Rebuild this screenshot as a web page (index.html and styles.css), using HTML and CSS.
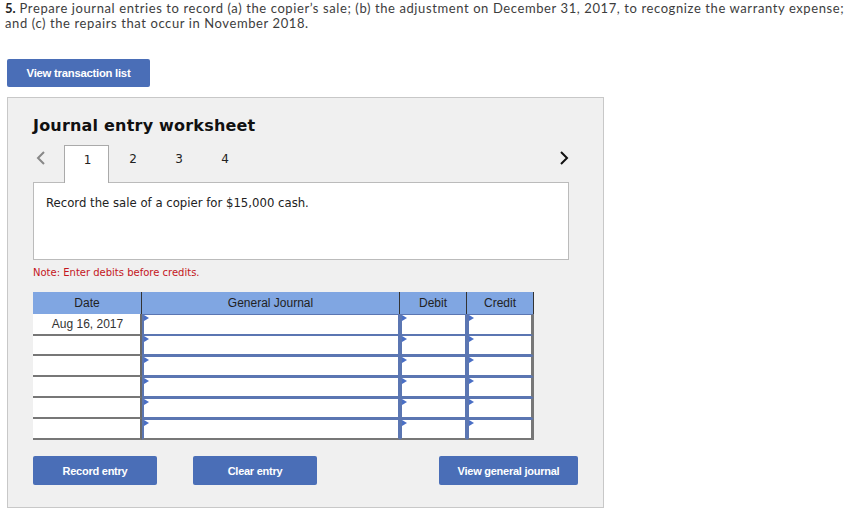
FILE: index.html
```html
<!DOCTYPE html>
<html>
<head>
<meta charset="utf-8">
<link rel="stylesheet" href="styles.css">
</head>
<body>
<p class="question"><span class="num">5.</span> Prepare journal entries to record (a) the copier’s sale; (b) the adjustment on December 31, 2017, to recognize the warranty expense; and (c) the repairs that occur in November 2018.</p>
<button class="btn btn-list">View transaction list</button>
<div class="panel">
  <h2 class="title">Journal entry worksheet</h2>
  <div class="tabs">
    <svg class="chev chev-left" width="10" height="14" viewBox="0 0 10 14"><path d="M8 1 L2 7 L8 13" fill="none" stroke="#888" stroke-width="2"/></svg>
    <div class="tab active">1</div>
    <div class="tab">2</div>
    <div class="tab">3</div>
    <div class="tab">4</div>
    <svg class="chev chev-right" width="10" height="14" viewBox="0 0 10 14"><path d="M2 1 L8 7 L2 13" fill="none" stroke="#111" stroke-width="2"/></svg>
  </div>
  <div class="desc">Record the sale of a copier for $15,000 cash.</div>
  <p class="note">Note: Enter debits before credits.</p>
  <div class="journal">
    <div class="hrow">
      <div class="hcell">Date</div>
      <div class="hcell">General Journal</div>
      <div class="hcell">Debit</div>
      <div class="hcell">Credit</div>
    </div>
    <div class="row"><div class="date">Aug 16, 2017</div><div class="inp"></div><div class="inp"></div><div class="inp"></div></div>
    <div class="row"><div class="date"></div><div class="inp"></div><div class="inp"></div><div class="inp"></div></div>
    <div class="row"><div class="date"></div><div class="inp"></div><div class="inp"></div><div class="inp"></div></div>
    <div class="row"><div class="date"></div><div class="inp"></div><div class="inp"></div><div class="inp"></div></div>
    <div class="row"><div class="date"></div><div class="inp"></div><div class="inp"></div><div class="inp"></div></div>
    <div class="row"><div class="date"></div><div class="inp"></div><div class="inp"></div><div class="inp"></div></div>
  </div>
  <div class="actions">
    <button class="btn btn-record">Record entry</button>
    <button class="btn btn-clear">Clear entry</button>
    <button class="btn btn-view">View general journal</button>
  </div>
</div>
</body>
</html>
```
FILE: styles.css
```css
html, body { margin: 0; padding: 0; background: #fff; }
body { padding: 0 5px; }
.question {
  margin: 0; padding-top: 1px;
  font-family: "Lato", "Liberation Sans", sans-serif;
  font-size: 13px; line-height: 15px; color: #3d3d3d;
  letter-spacing: 0.6px;
  width: 845px;
}
.question .num { font-weight: bold; color: #222; letter-spacing: 0; }
.btn {
  background: #4a6eb7; color: #fff; border: none; border-radius: 2px;
  font-family: "Liberation Sans", Arial, sans-serif; font-weight: bold;
  font-size: 11px; letter-spacing: -0.25px; height: 29px; padding: 0;
  display: block; cursor: pointer;
}
.btn-list { margin: 28px 0 0 2px; width: 143px; height: 28px; font-size: 11.3px; }
.panel {
  margin: 10px 0 0 2px; width: 570px; height: 409px;
  border: 1px solid #c8c8c8; background: #f0f0f0;
  padding: 0 0 0 25px; box-sizing: content-box;
}
.title {
  margin: 17px 0 0 0; font-family: "DejaVu Sans", Verdana, sans-serif;
  font-size: 16px; font-weight: bold; color: #111; line-height: 22px;
  letter-spacing: 0.2px;
}
.tabs { display: flex; align-items: flex-start; height: 37px; margin-top: 8px; width: 536px; }
.chev { margin-top: 6px; }
.chev-left { margin-left: 3px; margin-right: 18px; }
.tab {
  width: 46px; height: 36px; box-sizing: border-box;
  font-family: "DejaVu Sans", Verdana, sans-serif; font-size: 12px; color: #222;
  text-align: center; padding-top: 7px;
}
.tab.active {
  width: 45px; margin-right: 1px; padding-left: 2px;
  background: #fff; border: 1px solid #aaa; border-bottom: none; height: 38px;
  position: relative; z-index: 1;
}
.chev-right { margin-left: auto; margin-right: 0; }
.desc {
  width: 536px; height: 78px; box-sizing: border-box; background: #fff;
  border: 1px solid #bbb; padding: 13px 0 0 12px;
  font-family: "DejaVu Sans", Verdana, sans-serif; font-size: 11.7px; color: #222;
}
.note {
  margin: 7px 0 0 0; font-family: "DejaVu Sans", Verdana, sans-serif;
  font-size: 10px; color: #c4161c; line-height: 12px;
}
.journal { margin-top: 13px; width: 501px; }
.hrow, .row { display: grid; grid-template-columns: 109px 258px 67px 67px; }
.hrow { background: #80a6e2; height: 22px; }
.hcell {
  font-family: "Liberation Sans", Arial, sans-serif; font-size: 12px; color: #222;
  text-align: center; line-height: 22px; border-right: 1px solid #333;
}
.row { height: 21px; background: #fff; }
.date {
  font-family: "Liberation Sans", Arial, sans-serif; font-size: 12px; color: #333;
  text-align: center; line-height: 20px; padding-left: 2px;
  border-bottom: 2px solid #777; border-right: 2px solid #6a6a6a; box-sizing: border-box;
}
.inp {
  position: relative; box-sizing: border-box; background: #fff;
  border: 2px solid #5b76b2; border-top-width: 1px; border-bottom-width: 2px;
}
.row .inp:last-child { border-right: 3px solid #777; }
.inp::before {
  content: ""; position: absolute; left: 0; top: 0;
  border-left: 5px solid #4a6fc5; border-top: 3px solid transparent; border-bottom: 3px solid transparent;
}
.row:last-child .inp { border-bottom: 2px solid #777; }
.actions { display: flex; margin-top: 16px; }
.btn-record { width: 124px; }
.btn-clear { width: 124px; margin-left: 36px; }
.btn-view { width: 139px; margin-left: 122px; }
```
